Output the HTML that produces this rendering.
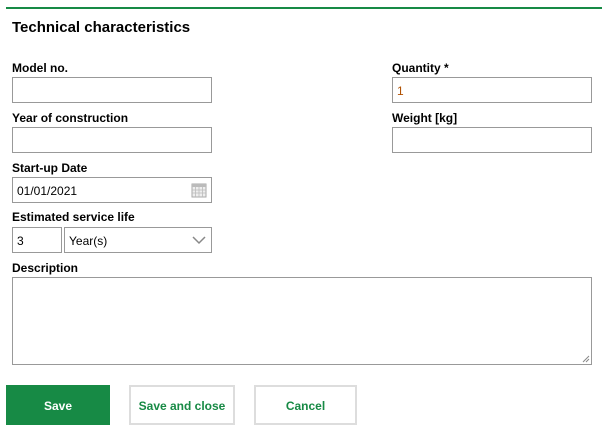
<!DOCTYPE html>
<html><head><style>
*{box-sizing:border-box;margin:0;padding:0}
body{width:602px;height:432px;background:#fff;font-family:"Liberation Sans",sans-serif;position:relative;overflow:hidden;color:#000}
.line{position:absolute;left:6px;top:7px;width:596px;height:2px;background:#178a45}
.t{position:absolute;left:12px;top:19px;font-size:15px;font-weight:bold}
.l{position:absolute;font-size:12px;font-weight:bold}
.i{position:absolute;border:1px solid #999;background:#fff;height:26px;font-size:12px;padding:6px 0 0 4px}
.b{position:absolute;top:385px;height:40px;font-size:12px;font-weight:bold;text-align:center;line-height:39px;color:#178a45;border:2px solid #ddd}
</style></head><body>
<div class="line"></div>
<div class="t">Technical characteristics</div>
<div class="l" style="left:12px;top:61px">Model no.</div>
<div class="i" style="left:12px;top:77px;width:200px"></div>
<div class="l" style="left:392px;top:61px">Quantity *</div>
<div class="i" style="left:392px;top:77px;width:200px;color:#b05000">1</div>
<div class="l" style="left:12px;top:111px">Year of construction</div>
<div class="i" style="left:12px;top:127px;width:200px"></div>
<div class="l" style="left:392px;top:111px">Weight [kg]</div>
<div class="i" style="left:392px;top:127px;width:200px"></div>
<div class="l" style="left:12px;top:161px">Start-up Date</div>
<div class="i" style="left:12px;top:177px;width:200px">01/01/2021
<svg style="position:absolute;right:4px;top:4px" width="16" height="16" viewBox="0 0 16 16"><rect x="1" y="2" width="14" height="13" fill="#eee" stroke="#aaa"/><rect x="1" y="2" width="14" height="3" fill="#bbb"/><path d="M1 8h14M1 11h14M4.5 5v10M8 5v10M11.5 5v10" stroke="#bbb" stroke-width="0.8"/></svg></div>
<div class="l" style="left:12px;top:210px">Estimated service life</div>
<div class="i" style="left:12px;top:227px;width:50px">3</div>
<div class="i" style="left:64px;top:227px;width:148px">Year(s)
<svg style="position:absolute;right:5px;top:7px" width="14" height="10" viewBox="0 0 14 10"><path d="M1 2l6 6 6-6" fill="none" stroke="#888" stroke-width="1.5"/></svg></div>
<div class="l" style="left:12px;top:261px">Description</div>
<div class="i" style="left:12px;top:277px;width:580px;height:88px">
<svg style="position:absolute;right:1px;bottom:1px" width="8" height="8"><path d="M7 1L1 7M7 4L4 7" stroke="#888"/></svg></div>
<div class="b" style="left:6px;width:104px;background:#178a45;border-color:#178a45;color:#fff">Save</div>
<div class="b" style="left:129px;width:106px">Save and close</div>
<div class="b" style="left:254px;width:103px">Cancel</div>
</body></html>
